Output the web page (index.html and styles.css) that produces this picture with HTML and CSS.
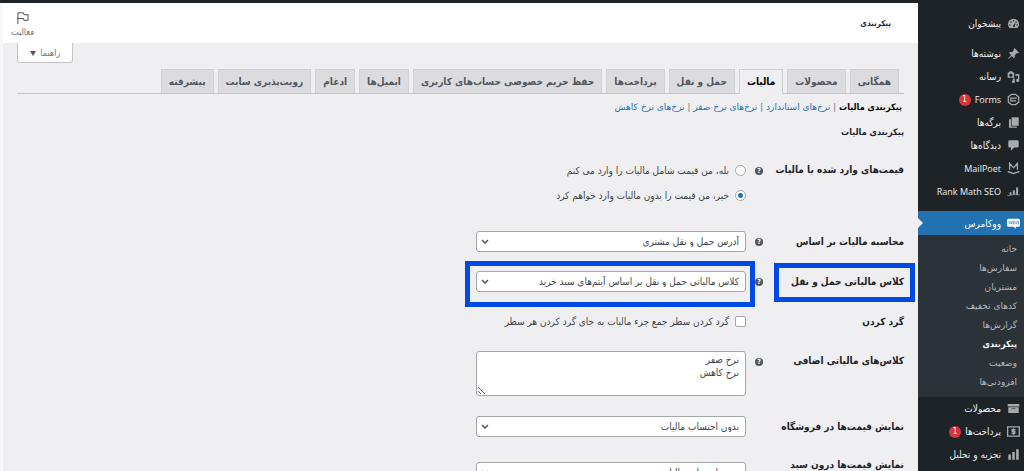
FILE: index.html
```html
<!DOCTYPE html>
<html lang="fa" dir="rtl">
<head>
  <meta charset="UTF-8" />
  <meta name="viewport" content="width=device-width, initial-scale=1.0" />
  <title>پیکربندی مالیات</title>
  <link rel="stylesheet" href="styles.css">
</head>
<body>
  <div class="adminbar"></div>

  <div class="layout">
    <!-- Admin menu -->
    <nav class="menu">
      <ul class="menu-list">
        <li><a href="#"><svg class="icon" viewBox="0 0 20 20"><path d="M3.8 17h12.4a8.5 8.5 0 1 0-12.4 0z"/><path class="cut" d="M9 5h2v2H9zM5 7h2v2H5zM13 7h2v2h-2zM3.500 11h2v2h-2zM14.500 11h2v2h-2zM9 14l4-5-1 6a1.700 1.700 0 0 1-3-1z"/></svg><span>پیشخوان</span></a></li>
        <li class="gap"><a href="#"><svg class="icon" viewBox="0 0 20 20"><path d="M10.400 3l1-1.500 7 7-1.500 1c-.7.200-1.500 0-2 0l-3 3c.6 1.800.3 3.500-1 4.700l-3.300-3.400L2 18.500 1.500 18l4.700-5.600L2.900 9c1.200-1.200 3-1.500 4.600-1l3-3c-.2-.7-.3-1.400-.1-2z"/></svg><span>نوشته‌ها</span></a></li>
        <li><a href="#"><svg class="icon" viewBox="0 0 20 20"><path d="M1 4h2l1-2h4l1 2h2v8H1z"/><circle class="cut" cx="6" cy="8" r="2.500"/><path d="M13 6h6v10a2.500 2.500 0 1 1-2-2.400V9h-4zM9 13h3v5a2.200 2.200 0 1 1-3-2z"/></svg><span>رسانه</span></a></li>
        <li><a href="#"><svg class="icon" viewBox="0 0 20 20"><path class="line" d="M7 2h6l5 4v8l-5 4H7l-5-4V6z"/><path class="line" d="M6 8h9M6 12h8M6 7v6"/></svg><span class="latin">Forms</span><span class="badge">1</span></a></li>
        <li><a href="#"><svg class="icon" viewBox="0 0 20 20"><path d="M7 2h11v13H7z"/><path d="M3 5h3v11h9v2H3z"/></svg><span>برگه‌ها</span></a></li>
        <li><a href="#"><svg class="icon" viewBox="0 0 20 20"><path d="M4 2h12a2 2 0 0 1 2 2v7a2 2 0 0 1-2 2h-5l-5 5v-5H4a2 2 0 0 1-2-2V4a2 2 0 0 1 2-2z"/></svg><span>دیدگاه‌ها</span></a></li>
        <li><a href="#"><svg class="icon" viewBox="0 0 20 20"><path class="line" d="M4 12V2l6 7 6-7v10"/><path class="line" d="M1 15c3 0 5 1 9 3 4-2 6-3 9-3"/></svg><span class="latin">MailPoet</span></a></li>
        <li><a href="#"><svg class="icon" viewBox="0 0 20 20"><path d="M4 11h3v4H4zM9 8h3v7H9zM14 4h3v11h-3z"/><path class="line thin" d="M0 16h5l8-2 4-6M13 15h7"/></svg><span class="latin">Rank Math SEO</span></a></li>
        <li class="gap current"><a href="#"><svg class="icon woo" viewBox="0 0 24 20"><path d="M3 1h18a3 3 0 0 1 3 3v9a3 3 0 0 1-3 3h-5l1 4-5-4H3a3 3 0 0 1-3-3V4a3 3 0 0 1 3-3z"/><path class="woo-mark" d="M3 5l2 6 2-5 2 5 1-6M12 6h3v5h-3zM18 6h3v5h-3z"/></svg><span>ووکامرس</span></a>
          <ul class="submenu">
            <li><a href="#">خانه</a></li>
            <li><a href="#">سفارش‌ها</a></li>
            <li><a href="#">مشتریان</a></li>
            <li><a href="#">کدهای تخفیف</a></li>
            <li><a href="#">گزارش‌ها</a></li>
            <li><a href="#" class="active">پیکربندی</a></li>
            <li><a href="#">وضعیت</a></li>
            <li><a href="#">افزودنی‌ها</a></li>
          </ul>
        </li>
        <li><a href="#"><svg class="icon" viewBox="0 0 20 20"><path d="M1 3h18v4H1zM2 8h16v9H2z"/><path class="cut" d="M7 10h6v1H7z"/></svg><span>محصولات</span></a></li>
        <li><a href="#"><svg class="icon" viewBox="0 0 20 20"><path class="line" d="M1 3h18v14H1z"/><path class="line" d="M13 7H8v3h4v3H7M10 5v10"/></svg><span>پرداخت‌ها</span><span class="badge">1</span></a></li>
        <li><a href="#"><svg class="icon" viewBox="0 0 20 20"><path d="M2 10h4v8H2zM8 6h4v12H8zM14 2h4v16h-4z"/></svg><span>تجزیه و تحلیل</span></a></li>
      </ul>
    </nav>

    <main class="content">
      <header class="header">
        <h1>پیکربندی</h1>
        <button type="button" class="activity">
          <svg viewBox="0 0 14 14"><path d="M2 14V2h6l.6 2H13v6H8.500l-.6-2H2"/></svg>
          <span>فعالیت</span>
        </button>
      </header>

      <div class="page">
        <button type="button" class="help-tab">راهنما <svg viewBox="0 0 6 5"><path d="M0 0h6L3 5z"/></svg></button>

        <nav class="tabs">
          <a href="#">همگانی</a>
          <a href="#">محصولات</a>
          <a href="#" class="active">مالیات</a>
          <a href="#">حمل و نقل</a>
          <a href="#">پرداخت‌ها</a>
          <a href="#">حفظ حریم خصوصی حساب‌های کاربری</a>
          <a href="#">ایمیل‌ها</a>
          <a href="#">ادغام</a>
          <a href="#">رویت‌پذیری سایت</a>
          <a href="#">پیشرفته</a>
        </nav>

        <ul class="sections">
          <li><a href="#" class="active">پیکربندی مالیات</a></li>
          <li><a href="#">نرخ‌های استاندارد</a></li>
          <li><a href="#">نرخ‌های نرخ صفر</a></li>
          <li><a href="#">نرخ‌های نرخ کاهش</a></li>
        </ul>

        <h2>پیکربندی مالیات</h2>

        <form class="settings">
          <div class="row row-top" role="radiogroup" aria-labelledby="pricesLabel">
            <span class="label" id="pricesLabel">قیمت‌های وارد شده با مالیات</span>
            <span class="tip">?</span>
            <div class="field options">
              <label><input type="radio" name="prices"> بله، من قیمت شامل مالیات را وارد می کنم</label>
              <label><input type="radio" name="prices" checked> خیر، من قیمت را بدون مالیات وارد خواهم کرد</label>
            </div>
          </div>

          <div class="row">
            <label class="label" for="basedOn">محاسبه مالیات بر اساس</label>
            <span class="tip">?</span>
            <div class="field select">
              <select id="basedOn"><option>آدرس حمل و نقل مشتری</option></select>
              <svg viewBox="0 0 8 5"><path d="M1 1l3 3 3-3"/></svg>
            </div>
          </div>

          <div class="row marked">
            <label class="label" for="shippingClass">کلاس مالیاتی حمل و نقل</label>
            <span class="tip">?</span>
            <div class="field select">
              <select id="shippingClass"><option>کلاس مالیاتی حمل و نقل بر اساس آیتم‌های سبد خرید</option></select>
              <svg viewBox="0 0 8 5"><path d="M1 1l3 3 3-3"/></svg>
            </div>
          </div>

          <div class="row">
            <label class="label" for="rounding">گرد کردن</label>
            <div class="field options">
              <label><input type="checkbox" id="rounding"> گرد کردن سطر جمع جزء مالیات به جای گرد کردن هر سطر</label>
            </div>
          </div>

          <div class="row row-top">
            <label class="label" for="extraClasses">کلاس‌های مالیاتی اضافی</label>
            <span class="tip">?</span>
            <div class="field">
              <textarea id="extraClasses">نرخ صفر
نرخ کاهش</textarea>
            </div>
          </div>

          <div class="row row-display">
            <label class="label" for="shopDisplay">نمایش قیمت‌ها در فروشگاه</label>
            <div class="field select">
              <select id="shopDisplay"><option>بدون احتساب مالیات</option></select>
              <svg viewBox="0 0 8 5"><path d="M1 1l3 3 3-3"/></svg>
            </div>
          </div>

          <div class="row">
            <label class="label" for="cartDisplay">نمایش قیمت‌ها درون سبد خرید و پرداخت</label>
            <div class="field select">
              <select id="cartDisplay"><option>بدون احتساب مالیات</option></select>
              <svg viewBox="0 0 8 5"><path d="M1 1l3 3 3-3"/></svg>
            </div>
          </div>
        </form>
      </div>
    </main>
  </div>
</body>
</html>
```
FILE: styles.css
```css
* {
  box-sizing: border-box;
}
body {
  margin: 0;
  height: 100vh;
  overflow: hidden;
  display: flex;
  flex-direction: column;
  background: #efeff1;
  color: #3c434a;
  font-family: "DejaVu Sans Condensed", "DejaVu Sans", sans-serif;
  font-size: 10px;
}
ul {
  list-style: none;
  margin: 0;
  padding: 0;
}
a {
  text-decoration: none;
}
button,
select,
textarea {
  font: inherit;
  color: inherit;
}
.adminbar {
  flex: none;
  height: 3px;
  background: #1d2327;
}
.layout {
  flex: 1;
  min-height: 0;
  display: flex;
}

/* menu */
.menu {
  flex: none;
  width: 106px;
  padding-top: 9px;
  background: #1d2327;
}
.menu a {
  display: flex;
  align-items: center;
  gap: 6px;
  height: 23px;
  padding-right: 4px;
  color: #f0f0f1;
  white-space: nowrap;
}
.menu .gap {
  margin-top: 7px;
}
.icon {
  flex: none;
  width: 13px;
  height: 13px;
  fill: #a7aaad;
}
.icon .cut {
  fill: #1d2327;
}
.icon .line {
  fill: none;
  stroke: #a7aaad;
  stroke-width: 2;
}
.icon .thin {
  stroke-width: 1;
}
.icon.woo {
  fill: #fff;
}
.icon .woo-mark {
  fill: none;
  stroke: #2271b1;
}
.latin {
  font-family: "Open Sans", sans-serif;
  font-size: 9px;
  font-weight: 500;
}
.badge {
  width: 12px;
  margin-right: -2px;
  border-radius: 6px;
  background: #d63638;
  color: #fff;
  font-size: 8px;
  line-height: 12px;
  text-align: center;
}
.menu .current {
  margin-top: 8px;
}
.current > a {
  position: relative;
  height: 24px;
  background: #2271b1;
  color: #fff;
}
.current > a::after {
  content: "";
  position: absolute;
  left: 0;
  top: 7px;
  border: 5px solid transparent;
  border-left-color: #efeff1;
  border-right: 0;
}
.menu .submenu {
  padding: 4px 0 6px;
  background: #2c3338;
}
.menu .submenu a {
  height: 19px;
  padding-right: 7px;
  color: #b4b9be;
  font-family: "DejaVu Sans", sans-serif;
  font-size: 9px;
}
.menu .submenu .active {
  color: #fff;
  font-family: inherit;
  font-weight: bold;
}

/* header */
.content {
  flex: 1;
  min-width: 0;
  border-left: 3px solid #f8f8fa;
}
.header {
  display: flex;
  align-items: center;
  justify-content: space-between;
  height: 40px;
  padding: 0 27px 0 8px;
  background: #fff;
}
.header h1 {
  margin: 0;
  color: #1d2327;
  font-size: 8px;
}
.activity {
  display: flex;
  flex-direction: column;
  align-items: center;
  gap: 2px;
  padding: 3px 0 0;
  border: 0;
  background: none;
  color: #757575;
  font-size: 9px;
  line-height: 12px;
}
.activity svg {
  width: 13px;
  height: 13px;
  fill: none;
  stroke: #3c434a;
  stroke-width: 1;
}
.page {
  padding: 0 14px;
}
.help-tab {
  display: block;
  width: 56px;
  height: 20px;
  margin-right: auto;
  padding: 0;
  border: 1px solid #c3c4c7;
  border-top: 0;
  border-radius: 0 0 3px 3px;
  background: #fff;
  color: #757575;
  font-size: 9px;
}
.help-tab svg {
  width: 6px;
  height: 5px;
  margin-right: 2px;
  fill: #50575e;
}

/* tabs */
.tabs {
  display: flex;
  gap: 4px;
  margin-top: 6px;
  padding-right: 5px;
  border-bottom: 1px solid #c3c4c7;
}
.tabs a {
  height: 24px;
  padding: 0 7px;
  border: 1px solid #cfd0d3;
  border-bottom: 0;
  background: #dcdcde;
  color: #50575e;
  font-weight: bold;
  line-height: 23px;
  white-space: nowrap;
}
.tabs .active {
  height: 25px;
  margin-bottom: -1px;
  background: #efeff1;
  color: #000;
}
.sections {
  display: flex;
  margin-top: 5px;
  padding-right: 2px;
  font-size: 9px;
  line-height: 16px;
}
.sections li + li::before {
  content: "|";
  margin: 0 3px;
  color: #646970;
}
.sections a {
  color: #2271b1;
  font-family: "DejaVu Sans", sans-serif;
}
.sections .active {
  color: #000;
  font-family: inherit;
  font-weight: bold;
}
h2 {
  margin: 9px 0 20px;
  color: #1d2327;
  font-size: 9px;
  line-height: 16px;
}

/* settings form */
.settings {
  display: flex;
  flex-direction: column;
  gap: 19px;
}
.row {
  display: grid;
  grid-template-columns: 141px 17px 270px;
  align-items: center;
  min-height: 21px;
}
.row-top {
  align-items: start;
}
.row-display {
  padding: 1px 0 2px;
}
.label {
  padding-left: 7px;
  color: #1d2327;
  font-weight: bold;
  line-height: 14px;
}
.row-top .label {
  padding-top: 3px;
}
.row-top .tip {
  margin-top: 7px;
}
.field {
  grid-column: 3;
}
.tip {
  width: 8px;
  height: 8px;
  border-radius: 50%;
  background: #50575e;
  color: #fff;
  font-size: 7px;
  font-weight: bold;
  line-height: 8px;
  text-align: center;
}
.options {
  display: flex;
  flex-direction: column;
  gap: 4px;
}
.row-top .options {
  padding-bottom: 6px;
}
.options label {
  display: flex;
  align-items: center;
  gap: 6px;
  height: 21px;
  white-space: nowrap;
}
.options input {
  appearance: none;
  width: 11px;
  height: 11px;
  margin: 0;
  border: 1px solid #a3a6aa;
  border-radius: 2px;
  background: #fff;
}
.options input[type="radio"] {
  border-radius: 50%;
}
.options input:checked {
  background: radial-gradient(circle, #2271b1 0 2px, #fff 3px);
}
.select {
  position: relative;
}
.select select {
  display: block;
  appearance: none;
  width: 100%;
  height: 21px;
  padding: 0 6px 0 20px;
  border: 1px solid #a3a6aa;
  border-radius: 3px;
  background: #fff;
}
.select svg {
  position: absolute;
  left: 5px;
  top: 8px;
  width: 8px;
  height: 5px;
  fill: none;
  stroke: #50575e;
  stroke-width: 1.500;
}
textarea {
  display: block;
  width: 100%;
  height: 45px;
  padding: 1px 6px;
  border: 1px solid #a3a6aa;
  border-radius: 3px;
  background: #fff;
  line-height: 13px;
}

/* highlighted setting */
.marked .label {
  position: relative;
}
.marked .label::after,
.marked .field::after {
  content: "";
  position: absolute;
  border: 5px solid #0049e5;
  pointer-events: none;
}
.marked .label::after {
  inset: -12px -11px -13px 11px;
}
.marked .field::after {
  inset: -10px -9px -15px -11px;
}
```
